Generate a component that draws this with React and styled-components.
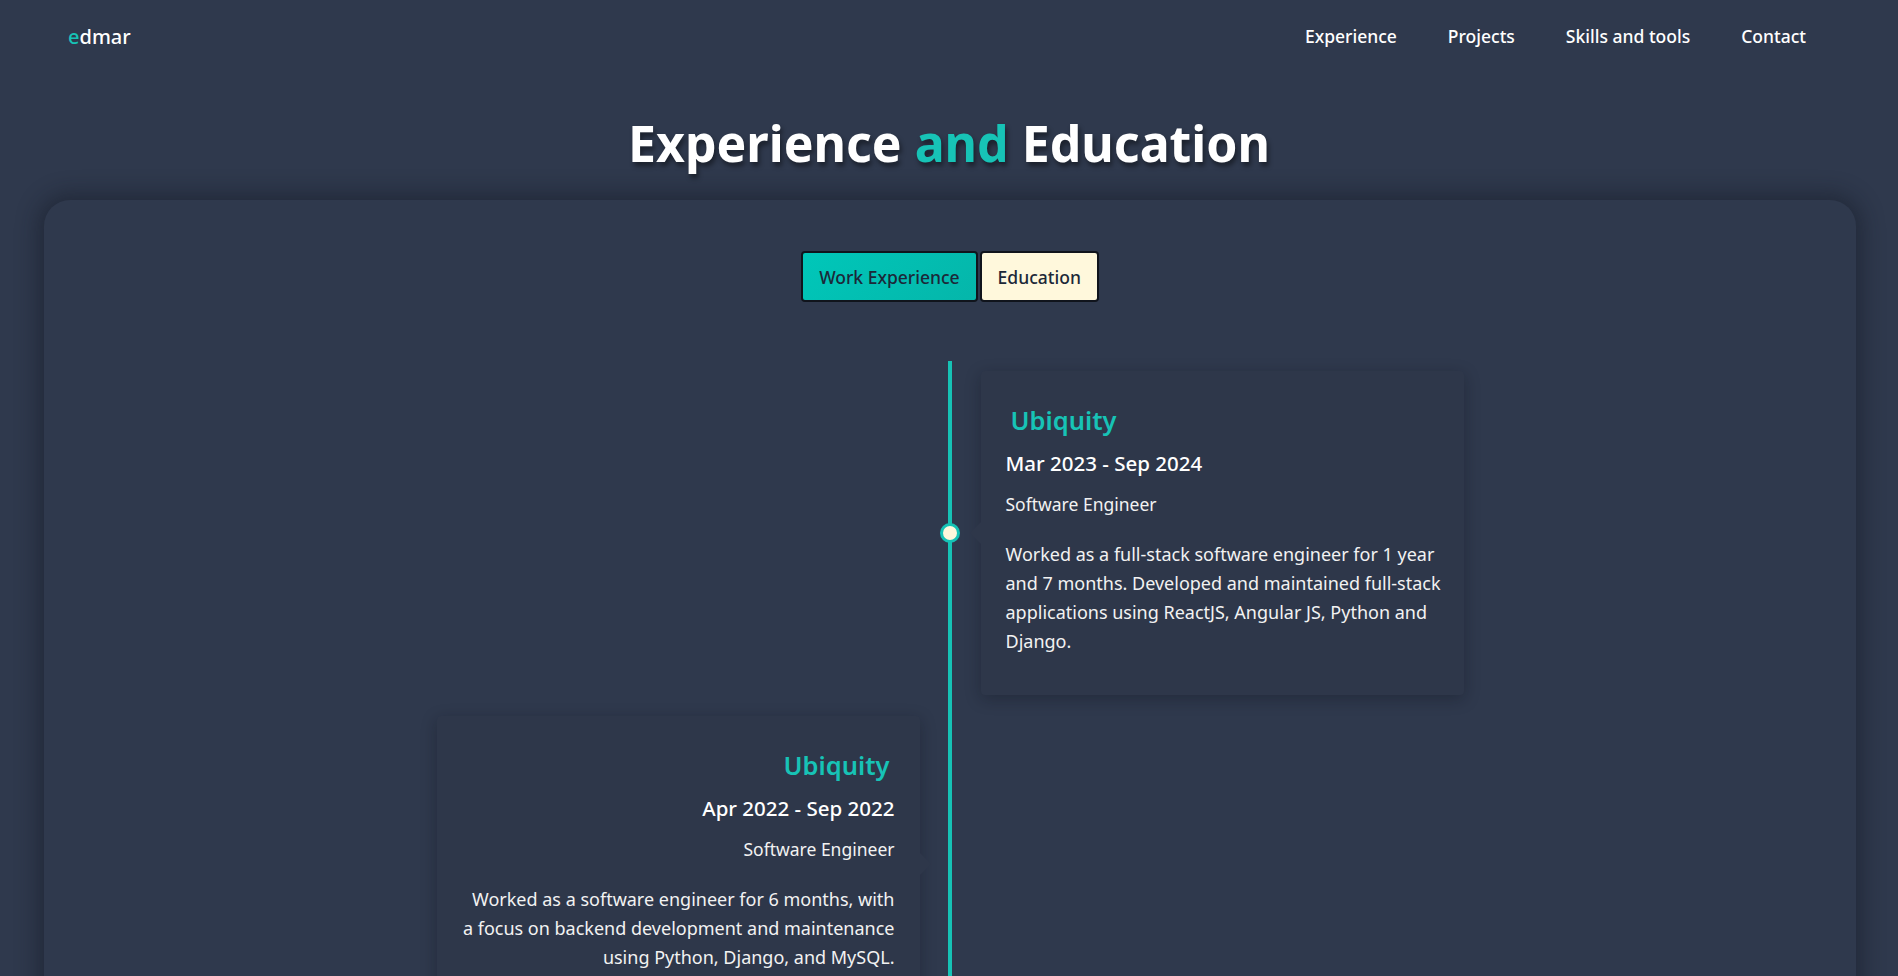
import React, { useState } from "react";
import styled, { createGlobalStyle } from "styled-components";

const Global = createGlobalStyle`
  * { box-sizing: border-box; }
  html, body { margin: 0; padding: 0; }
  body {
    background: #2f394d;
    font-family: "Noto Sans", "Open Sans", sans-serif;
    color: #f4f4f4;
  }
`;

const Header = styled.header`
  height: 72px;
  padding: 0 92px 0 68px;
  display: flex;
  align-items: center;
  justify-content: space-between;
`;

const Logo = styled.a`
  font-size: 20px;
  font-weight: 500;
  color: #ffffff;
  text-decoration: none;
  span { color: #17c3b6; }
`;

const Nav = styled.nav`
  display: flex;
  gap: 51px;
`;

const NavLink = styled.a`
  font-size: 17.5px;
  font-weight: 500;
  color: #ffffff;
  text-decoration: none;
`;

const Title = styled.h1`
  margin: 43px 0 29px;
  text-align: center;
  font-size: 50px;
  line-height: 56px;
  font-weight: 700;
  color: #ffffff;
  text-shadow: 2px 4px 5px rgba(0, 0, 0, 0.45);
  span { color: #17c3b6; }
`;

const Panel = styled.section`
  margin: 0 42px 0 44px;
  background: #2f394d;
  border-radius: 26px;
  box-shadow: 0 0 22px 6px rgba(18, 23, 34, 0.45);
  padding: 51px 0 80px;
`;

const Toggle = styled.div`
  display: flex;
  justify-content: center;
  gap: 2px;
`;

const ToggleButton = styled.button`
  height: 51px;
  padding: 0 16px;
  border: 2px solid #10141c;
  border-radius: 4px;
  font-family: inherit;
  font-size: 17.5px;
  font-weight: 500;
  color: #1c2838;
  cursor: pointer;
  background: ${(p) =>
    p.$active ? "linear-gradient(135deg, #00c7b9 0%, #05b6aa 100%)" : "#fff8dc"};
`;

const Timeline = styled.div`
  position: relative;
  margin-top: 59px;
  padding-top: 10px;
  &::before {
    content: "";
    position: absolute;
    top: 0;
    bottom: -80px;
    left: calc(50% - 2px);
    width: 4px;
    background: #16c2b5;
  }
`;

const Item = styled.div`
  position: relative;
  width: 1027px;
  margin: 0 auto;
  display: grid;
  grid-template-columns: 1fr 1fr;
  column-gap: 61px;
  & + & { margin-top: 21px; }
`;

const Dot = styled.span`
  position: absolute;
  left: 50%;
  top: 50%;
  width: 20px;
  height: 20px;
  transform: translate(-50%, -50%);
  border-radius: 50%;
  background: #fff8dc;
  border: 3px solid #16c2b5;
  z-index: 2;
`;

const Card = styled.article`
  position: relative;
  grid-column: ${(p) => (p.$side === "right" ? 2 : 1)};
  background: #2e374a;
  border-radius: 4px;
  box-shadow: 0 4px 16px rgba(10, 14, 22, 0.3);
  padding: ${(p) => (p.$side === "right" ? "31px 16px 39px 25px" : "31px 25px 39px")};
  text-align: ${(p) => (p.$side === "right" ? "left" : "right")};
  &::before {
    content: "";
    position: absolute;
    top: 50%;
    transform: translateY(-50%);
    ${(p) => (p.$side === "right" ? "right: 100%;" : "left: 100%;")}
    border: 11px solid transparent;
    ${(p) =>
      p.$side === "right"
        ? "border-right-color: #2e374a; border-left-width: 0;"
        : "border-left-color: #2e374a; border-right-width: 0;"}
  }
`;

const Company = styled.h3`
  margin: 0;
  font-size: 25.5px;
  line-height: 36px;
  font-weight: 600;
  color: #17c3b6;
  padding: ${(p) => (p.$side === "right" ? "0 0 0 5px" : "0 5px 0 0")};
`;

const Dates = styled.h4`
  margin: 11px 0 0;
  font-size: 20.5px;
  line-height: 28px;
  font-weight: 500;
  color: #ffffff;
`;

const Role = styled.p`
  margin: 14px 0 0;
  font-size: 17.5px;
  line-height: 26px;
  color: #f2f2f2;
`;

const Desc = styled.p`
  margin: 23px 0 0;
  font-size: 18px;
  line-height: 29px;
  color: #f2f2f2;
`;

const items = [
  {
    side: "right",
    dot: true,
    company: "Ubiquity",
    dates: "Mar 2023 - Sep 2024",
    role: "Software Engineer",
    desc:
      "Worked as a full-stack software engineer for 1 year and 7 months. Developed and maintained full-stack applications using ReactJS, Angular JS, Python and Django.",
  },
  {
    side: "left",
    dot: false,
    company: "Ubiquity",
    dates: "Apr 2022 - Sep 2022",
    role: "Software Engineer",
    desc:
      "Worked as a software engineer for 6 months, with a focus on backend development and maintenance using Python, Django, and MySQL.",
  },
];

export default function App() {
  const [tab, setTab] = useState("work");
  return (
    <>
      <Global />
      <Header>
        <Logo href="#">
          <span>e</span>dmar
        </Logo>
        <Nav>
          <NavLink href="#">Experience</NavLink>
          <NavLink href="#">Projects</NavLink>
          <NavLink href="#">Skills and tools</NavLink>
          <NavLink href="#">Contact</NavLink>
        </Nav>
      </Header>
      <Title>
        Experience <span>and</span> Education
      </Title>
      <Panel>
        <Toggle>
          <ToggleButton $active={tab === "work"} onClick={() => setTab("work")}>
            Work Experience
          </ToggleButton>
          <ToggleButton $active={tab === "edu"} onClick={() => setTab("edu")}>
            Education
          </ToggleButton>
        </Toggle>
        <Timeline>
          {items.map((it, i) => (
            <Item key={i}>
              {it.dot && <Dot />}
              <Card $side={it.side}>
                <Company $side={it.side}>{it.company}</Company>
                <Dates>{it.dates}</Dates>
                <Role>{it.role}</Role>
                <Desc>{it.desc}</Desc>
              </Card>
            </Item>
          ))}
        </Timeline>
      </Panel>
    </>
  );
}
